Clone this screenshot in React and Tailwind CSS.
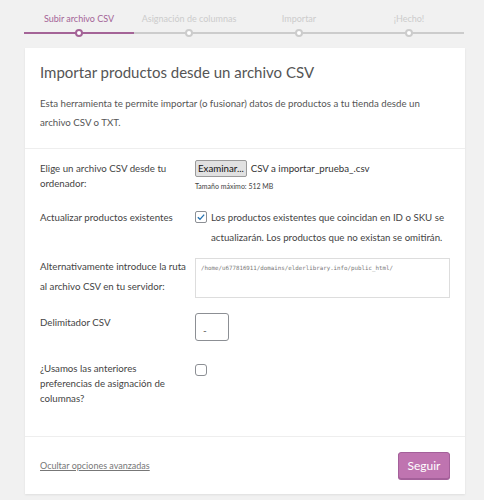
import React from "react";

const steps = ["Subir archivo CSV", "Asignación de columnas", "Importar", "¡Hecho!"];

const Steps = () => (
  <div className="flex w-[440px] ml-[24px] pt-[12px]">
    {steps.map((s, i) => (
      <div key={s} className="flex-1 flex flex-col items-center">
        <span className={`whitespace-nowrap text-[9px] leading-[14px] ${i === 0 ? "text-[#a46497]" : "text-[#cccccc]"}`}>{s}</span>
        <div className="relative w-full h-[14px] flex items-center justify-center">
          <div className={`absolute left-0 right-0 top-[6px] h-[2px] ${i === 0 ? "bg-[#a46497]" : "bg-[#cccccc]"}`} />
          <div
            className={`relative w-[8px] h-[8px] rounded-full bg-white border-2 ${i === 0 ? "border-[#a46497]" : "border-[#cccccc]"}`}
          />
        </div>
      </div>
    ))}
  </div>
);

export default function App() {
  return (
    <div className="w-[484px] h-[500px] bg-[#f1f1f1] font-['Lato',sans-serif] overflow-hidden">
      <Steps />
      <div className="ml-[25px] mt-[8px] w-[440px] bg-white shadow-[0_1px_2px_rgba(0,0,0,0.08)]">
        <div className="px-[15px] pt-[12px] pb-[16px] border-b border-[#eeeeee]">
          <h2 className="text-[15px] leading-[24px] text-[#555555]">Importar productos desde un archivo CSV</h2>
          <p className="mt-[10px] text-[9.7px] leading-[19px] text-[#555555]">
            Esta herramienta te permite importar (o fusionar) datos de productos a tu tienda desde un archivo CSV o TXT.
          </p>
        </div>

        <div className="px-[15px] pt-[11px] pb-[30px] text-[9.7px] text-[#444444]">
          <div className="flex">
            <div className="w-[155px] pr-[8px] leading-[15px] pt-[1px]">Elige un archivo CSV desde tu ordenador:</div>
            <div>
              <div className="flex items-center gap-[4px]">
                <span className="border border-[#9a9a9a] bg-[#e1e1e1] rounded-[2px] px-[2px] h-[17px] leading-[15px] text-[9.7px] text-[#111]">
                  Examinar...
                </span>
                <span className="text-[#333]">CSV a importar_prueba_.csv</span>
              </div>
              <div className="mt-[3px] text-[7px] leading-[12px] text-[#444]">Tamaño máximo: 512 MB</div>
            </div>
          </div>

          <div className="flex mt-[15px]">
            <div className="w-[155px] pr-[8px] leading-[20px]">Actualizar productos existentes</div>
            <div className="w-[255px] leading-[20px] relative pl-[16px]">
              <span className="absolute left-0 top-[4px] w-[12px] h-[12px] border border-[#8c8f94] rounded-[2px] bg-white flex items-center justify-center">
                <svg viewBox="0 0 12 12" className="w-[10px] h-[10px]">
                  <path d="M2.2 6.2 L4.8 8.8 L9.8 3.2" fill="none" stroke="#2271b1" strokeWidth="1.6" />
                </svg>
              </span>
              Los productos existentes que coincidan en ID o SKU se actualizarán. Los productos que no existan se omitirán.
            </div>
          </div>

          <div className="flex mt-[9px]">
            <div className="w-[155px] pr-[8px] leading-[20px]">Alternativamente introduce la ruta al archivo CSV en tu servidor:</div>
            <div className="mt-[2px] w-[255px] h-[40px] border border-[#dddddd] px-[5px] pt-[3px] font-['DejaVu_Sans_Mono',monospace] text-[5.8px] leading-[12px] text-[#777]">
              /home/u677816911/domains/elderlibrary.info/public_html/
            </div>
          </div>

          <div className="flex mt-[14px]">
            <div className="w-[155px] pr-[8px] leading-[20px]">Delimitador CSV</div>
            <div className="mt-[1px] w-[34px] h-[28px] border border-[#8c8f94] rounded-[3px] px-[7px] pt-[9px] text-[10px] leading-[14px] text-[#555]">
              -
            </div>
          </div>

          <div className="flex mt-[20px]">
            <div className="w-[155px] pr-[8px] leading-[15px]">¿Usamos las anteriores preferencias de asignación de columnas?</div>
            <span className="mt-[3px] w-[12px] h-[12px] border border-[#8c8f94] rounded-[3px] bg-white" />
          </div>
        </div>

        <div className="border-t border-[#eeeeee] px-[15px] pt-[15px] pb-[15px] flex items-center justify-between">
          <a className="text-[9px] text-[#777] underline">Ocultar opciones avanzadas</a>
          <button className="w-[52px] h-[27px] rounded-[3px] bg-[#bf74b0] border border-[#a4609a] text-white text-[12px] shadow-[0_1px_0_#a4609a]">
            Seguir
          </button>
        </div>
      </div>
    </div>
  );
}
